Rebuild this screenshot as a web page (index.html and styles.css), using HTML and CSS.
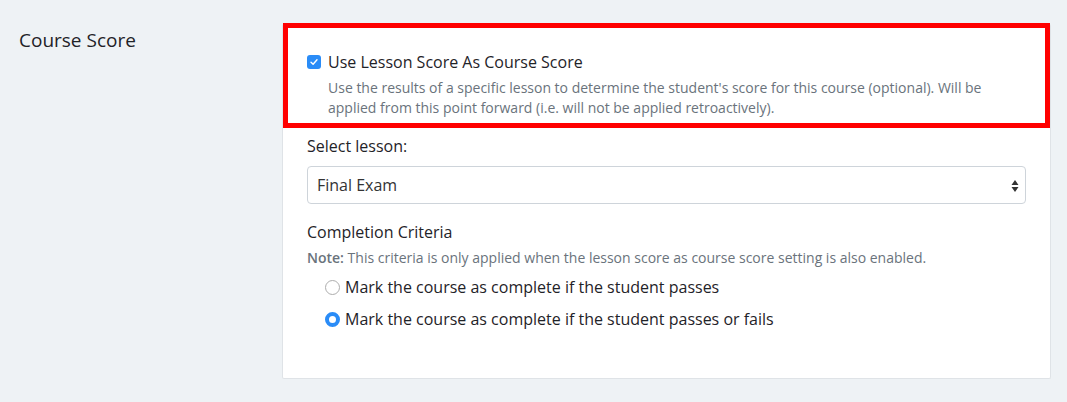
FILE: index.html
```html
<!DOCTYPE html>
<html>
<head>
<meta charset="utf-8">
<link rel="stylesheet" href="styles.css">
</head>
<body>
<div class="page">
  <div class="label-col">Course Score</div>
  <div class="card">
    <div class="highlight"></div>
    <div class="check-row">
      <span class="checkbox"><svg width="10" height="10" viewBox="0 0 10 10"><path d="M2 5.2 L4.1 7.3 L8 2.8" fill="none" stroke="#fff" stroke-width="1.4" stroke-linecap="round" stroke-linejoin="round"/></svg></span>
      <span class="check-label">Use Lesson Score As Course Score</span>
    </div>
    <p class="help">Use the results of a specific lesson to determine the student's score for this course (optional). Will be applied from this point forward (i.e. will not be applied retroactively).</p>
    <div class="field-label">Select lesson:</div>
    <div class="select">
      <span>Final Exam</span>
      <svg class="arrows" width="8" height="14" viewBox="0 0 8 14"><path d="M4 1 L7.5 6 L0.5 6 Z M4 13 L7.5 8 L0.5 8 Z" fill="#333"/></svg>
    </div>
    <div class="section-title">Completion Criteria</div>
    <div class="note"><b>Note:</b> This criteria is only applied when the lesson score as course score setting is also enabled.</div>
    <div class="radios">
      <div class="radio-row"><span class="radio"></span><span>Mark the course as complete if the student passes</span></div>
      <div class="radio-row"><span class="radio on"></span><span>Mark the course as complete if the student passes or fails</span></div>
    </div>
  </div>
</div>
</body>
</html>
```
FILE: styles.css
```css
html, body { margin: 0; padding: 0; }
body {
  background: #eef2f5;
  font-family: "Open Sans", "Liberation Sans", sans-serif;
  color: #1f2328;
  width: 1067px;
  height: 402px;
  overflow: hidden;
}
.page {
  display: flex;
  padding: 24px 16px 0 0;
}
.label-col {
  width: 282px;
  box-sizing: border-box;
  padding: 3px 0 0 19px;
  font-size: 19px;
  line-height: 26px;
}
.card {
  position: relative;
  width: 769px;
  height: 355px;
  box-sizing: border-box;
  background: #fff;
  border: 1px solid #dfe3e7;
  border-top: none;
  border-radius: 2px;
  padding: 27px 24px 0 24px;
}
.highlight {
  position: absolute;
  left: 0;
  top: -1px;
  width: 767px;
  height: 105px;
  box-sizing: border-box;
  border: 5px solid #ff0000;
}
.check-row {
  display: flex;
  align-items: center;
  gap: 7px;
  height: 22px;
  font-size: 16px;
}
.checkbox {
  width: 14px;
  height: 14px;
  border-radius: 3px;
  background: #2a8cf7;
  display: flex;
  align-items: center;
  justify-content: center;
  flex: none;
}
.help {
  margin: 5px 0 0 21px;
  font-size: 14px;
  line-height: 20px;
  color: #6a737c;
  width: 680px;
}
.field-label {
  margin-top: 17px;
  font-size: 16px;
  line-height: 22px;
}
.select {
  margin-top: 9px;
  height: 38px;
  box-sizing: border-box;
  border: 1px solid #ced4da;
  border-radius: 4px;
  display: flex;
  align-items: center;
  justify-content: space-between;
  padding: 0 6px 0 9px;
  font-size: 16px;
  color: #333;
}
.arrows { margin-top: 1px; }
.section-title {
  margin-top: 17px;
  font-size: 16px;
  line-height: 22px;
}
.note {
  margin-top: 5px;
  font-size: 14px;
  line-height: 20px;
  color: #6a737c;
}
.note b { font-weight: 600; }
.radios {
  padding-left: 18px;
  margin-top: 8px;
  display: flex;
  flex-direction: column;
  gap: 10px;
}
.radio-row {
  display: flex;
  align-items: center;
  gap: 5px;
  font-size: 16px;
  line-height: 22px;
}
.radio {
  width: 15px;
  height: 15px;
  box-sizing: border-box;
  border: 1px solid #adadad;
  border-radius: 50%;
  flex: none;
  background: #fff;
}
.radio.on {
  border: 4.5px solid #2a8cf7;
  background: #fff;
}
```
